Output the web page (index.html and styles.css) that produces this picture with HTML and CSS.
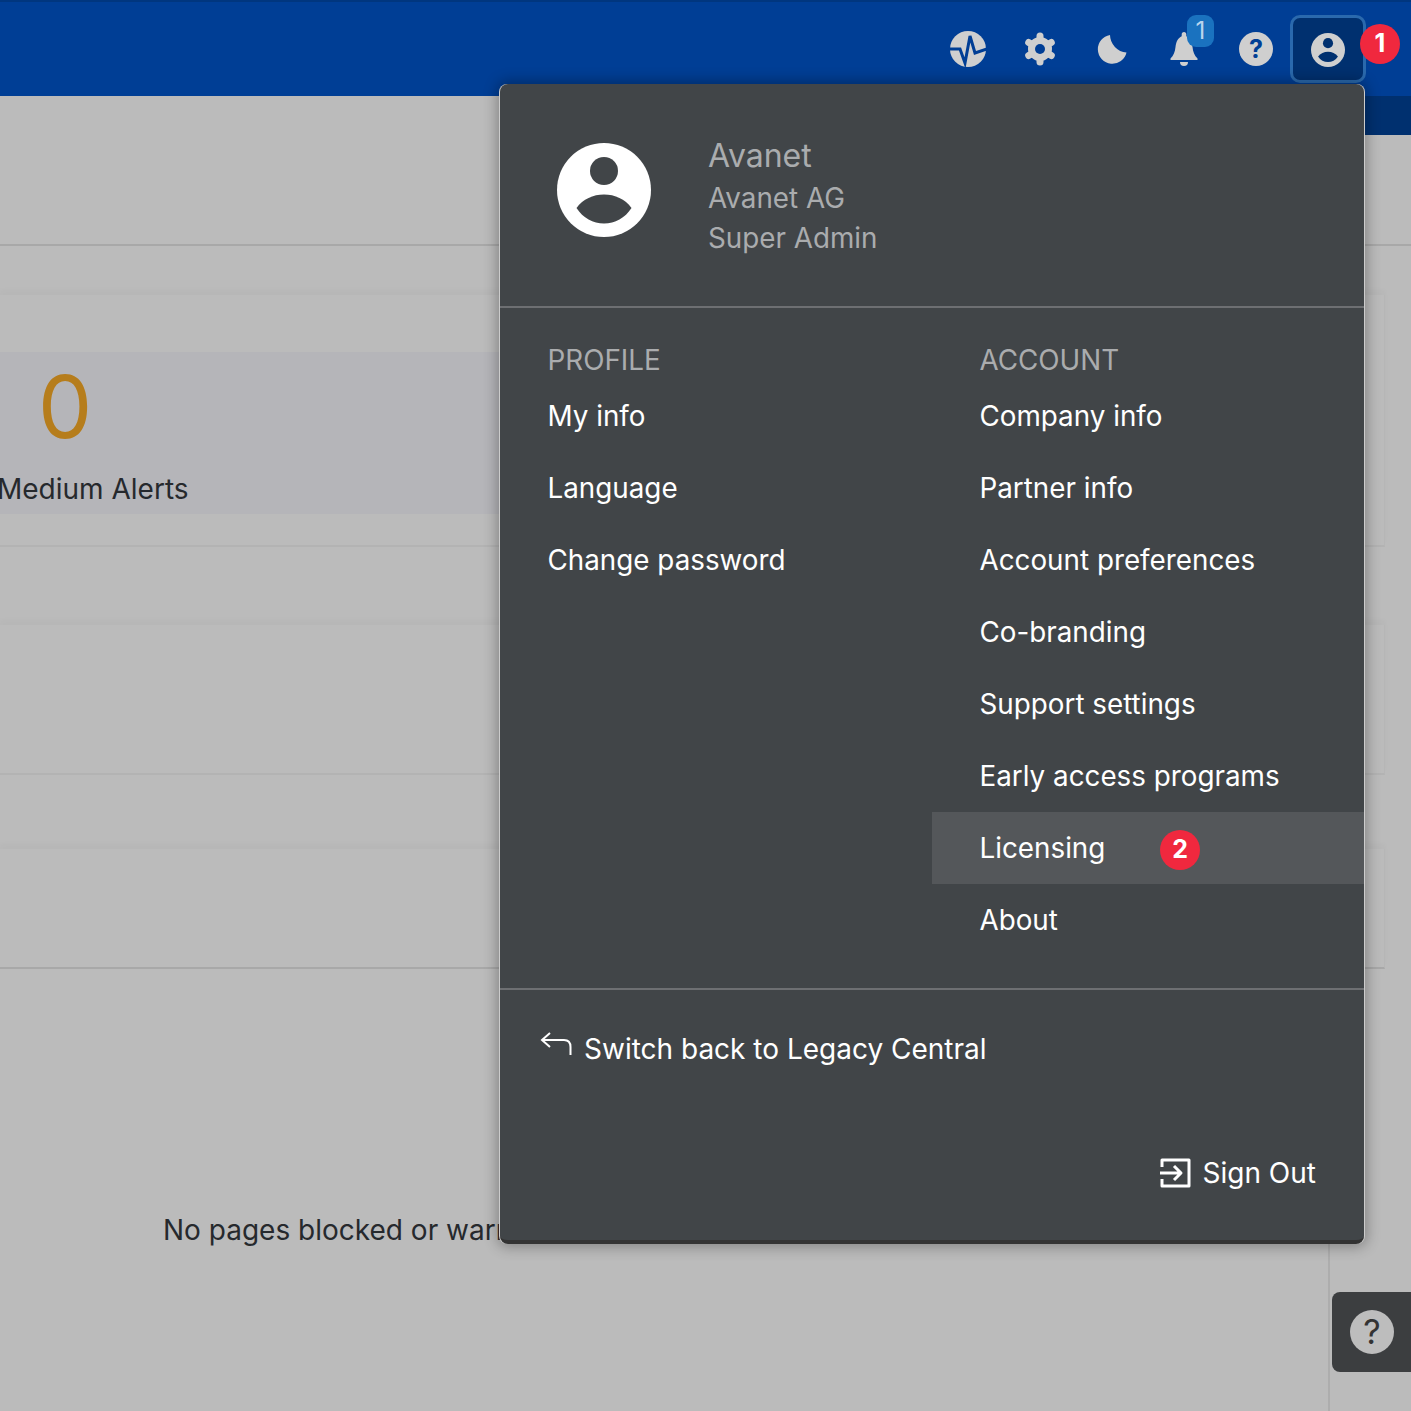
FILE: index.html
```html
<!DOCTYPE html>
<html lang="en">
<head>
    <meta charset="UTF-8">
    <meta name="viewport" content="width=device-width, initial-scale=1.0">
    <title>Central</title>
    <link rel="stylesheet" href="styles.css">
</head>
<body>
    <div class="page">
        <header class="topbar">
            <button class="top-btn">
                <svg width="38" height="38" viewBox="0 0 38 38">
                    <circle cx="19" cy="19" r="18" fill="#cfcfcf"/>
                    <polyline points="0,19 11,19 16,33 21,6 26,23 38,19" fill="none" stroke="#003e95" stroke-width="3"/>
                </svg>
            </button>
            <button class="top-btn">
                <svg width="36" height="36" viewBox="0 0 36 36">
                    <g stroke="#cfcfcf" stroke-width="7" stroke-linecap="round">
                        <line x1="18" y1="5" x2="18" y2="31"/>
                        <line x1="6.700" y1="11.500" x2="29.300" y2="24.500"/>
                        <line x1="6.700" y1="24.500" x2="29.300" y2="11.500"/>
                    </g>
                    <circle cx="18" cy="18" r="12" fill="#cfcfcf"/>
                    <circle cx="18" cy="18" r="5" fill="#003e95"/>
                </svg>
            </button>
            <button class="top-btn">
                <svg width="32" height="30" viewBox="0 0 32 30">
                    <path d="M14 1A14.500 14.500 0 1 0 30.500 18.500A18 18 0 0 1 14 1Z" fill="#cfcfcf"/>
                </svg>
            </button>
            <button class="top-btn">
                <svg width="28" height="34" viewBox="0 0 28 34">
                    <path d="M14 0c1.500 0 2.300 1 2.300 2.500v1.800C20 6 22 10 22.500 15c.5 5 2 8.500 5 11.500V28H.5v-1.500c3-3 4.500-6.500 5-11.500C6 10 8 6 11.700 4.300V2.500C11.700 1 12.500 0 14 0Z" fill="#cfcfcf"/>
                    <path d="M10 30h8a4 4 0 0 1-8 0Z" fill="#cfcfcf"/>
                </svg>
                <span class="bell-count">1</span>
            </button>
            <button class="top-btn">
                <span class="help-dot">?</span>
            </button>
            <button class="top-btn user-btn">
                <svg width="34" height="34" viewBox="0 0 94 94">
                    <circle cx="47" cy="47" r="47" fill="#cfcfcf"/>
                    <circle cx="47" cy="28" r="14" fill="#00306f"/>
                    <path d="M19.500 65C26 56 36 51.500 47 51.500S68 56 74.500 65C68 75 58 80.500 47 80.500S26 75 19.500 65Z" fill="#00306f"/>
                </svg>
                <span class="step-badge step-badge-top">1</span>
            </button>
        </header>

        <section class="page-head">
            <div class="subnav"></div>
        </section>

        <section class="card alerts-card">
            <div class="stat-band">
                <div class="stat-value">0</div>
                <div class="stat-label">Medium Alerts</div>
            </div>
        </section>
        <section class="card card-mid"></section>
        <section class="card card-low"></section>

        <section class="blocked">
            <p class="blocked-text">No pages blocked or warned</p>
        </section>

        <div class="user-menu">
            <div class="menu-head">
                <svg class="avatar" width="94" height="94" viewBox="0 0 94 94">
                    <circle cx="47" cy="47" r="47" fill="#ffffff"/>
                    <circle cx="47" cy="28" r="14" fill="#414548"/>
                    <path d="M19.500 65C26 56 36 51.500 47 51.500S68 56 74.500 65C68 75 58 80.500 47 80.500S26 75 19.500 65Z" fill="#414548"/>
                </svg>
                <div class="who">
                    <div class="who-name">Avanet</div>
                    <div class="who-line">Avanet AG</div>
                    <div class="who-line">Super Admin</div>
                </div>
            </div>

            <div class="menu-cols">
                <div class="menu-col">
                    <h3 class="col-title">PROFILE</h3>
                    <a class="menu-item">My info</a>
                    <a class="menu-item">Language</a>
                    <a class="menu-item">Change password</a>
                </div>
                <div class="menu-col">
                    <h3 class="col-title">ACCOUNT</h3>
                    <a class="menu-item">Company info</a>
                    <a class="menu-item">Partner info</a>
                    <a class="menu-item">Account preferences</a>
                    <a class="menu-item">Co-branding</a>
                    <a class="menu-item">Support settings</a>
                    <a class="menu-item">Early access programs</a>
                    <a class="menu-item menu-item-active">Licensing <span class="step-badge">2</span></a>
                    <a class="menu-item">About</a>
                </div>
            </div>

            <div class="menu-foot">
                <a class="switch-link">
                    <svg width="32" height="28" viewBox="0 0 32 28" fill="none" stroke="#ffffff" stroke-width="2">
                        <path d="M2 9H24Q30.500 9 30.500 16V24"/>
                        <path d="M10 2L2 9L10 16"/>
                    </svg>
                    Switch back to Legacy Central
                </a>
                <a class="sign-out">
                    <svg width="32" height="30" viewBox="0 0 32 30" fill="none" stroke="#ffffff" stroke-width="3" stroke-linejoin="round">
                        <path d="M3 9V2H30V28H3V21"/>
                        <path d="M1 15H22M15 8L22 15L15 22"/>
                    </svg>
                    Sign Out
                </a>
            </div>
        </div>

        <button class="help-tab"><span class="help-tab-dot">?</span></button>
    </div>
</body>
</html>
```

FILE: styles.css
```css
:root {
    --page: #bbbbbb;
    --blue: #003e95;
    --navy: #00306f;
    --menu: #414548;
    --rule: #a8a8a8;
    --red: #f0283e;
}

* {
    box-sizing: border-box;
}

body {
    margin: 0;
    background: var(--page);
    font-family: Inter, 'Liberation Sans', sans-serif;
    color: #26292d;
}

.page {
    position: relative;
    height: 1411px;
    overflow: hidden;
}

.topbar {
    display: flex;
    justify-content: flex-end;
    align-items: center;
    height: 96px;
    padding: 0 45px 0 0;
    background: var(--blue);
    border-top: 2px solid #00367f;
}

.top-btn {
    position: relative;
    display: flex;
    justify-content: center;
    align-items: center;
    width: 72px;
    height: 70px;
    padding: 0;
    border: none;
    background: none;
}

.user-btn {
    width: 76px;
    height: 68px;
    margin-left: -2px;
    padding-top: 2px;
    background: var(--navy);
    border: 3px solid #2a69ad;
    border-radius: 10px;
}

.bell-count {
    position: absolute;
    left: 39px;
    top: 1px;
    width: 27px;
    height: 32px;
    border-radius: 9px;
    background: #1a72bf;
    color: #b9d5ee;
    font: 24px/32px Inter, sans-serif;
    text-align: center;
}

.help-dot {
    width: 34px;
    height: 34px;
    border-radius: 50%;
    background: #cfcfcf;
    color: var(--blue);
    font: 700 25px/34px Inter, sans-serif;
    text-align: center;
}

.step-badge {
    display: inline-block;
    width: 40px;
    height: 40px;
    margin-left: 47px;
    border-radius: 50%;
    background: var(--red);
    color: #ffffff;
    font: 700 25px/38px Inter, sans-serif;
    text-align: center;
}

.step-badge-top {
    position: absolute;
    left: 67px;
    top: 6px;
    margin: 0;
}

.page-head {
    height: 150px;
    border-bottom: 2px solid var(--rule);
}

.subnav {
    width: 300px;
    height: 39px;
    margin-left: auto;
    background: var(--navy);
}

.card {
    width: 1385px;
    border-bottom: 2px solid #b3b3b3;
    border-right: 1px solid #b6b6b6;
    box-shadow: 0 -5px 5px rgba(0, 0, 0, 0.025);
}

.alerts-card {
    margin-top: 49px;
    padding: 57px 0 31px;
}

.stat-band {
    width: 1300px;
    height: 162px;
    padding-left: 38px;
    background: #b5b5b9;
}

.stat-value {
    height: 120px;
    padding-top: 6px;
    color: #b67d1c;
    font-size: 86px;
    font-weight: 400;
    line-height: 98px;
}

.stat-label {
    margin-left: -41px;
    font-size: 28px;
    line-height: 34px;
}

.card-mid {
    height: 150px;
    margin-top: 78px;
}

.card-low {
    height: 120px;
    margin-top: 74px;
    border-bottom-color: var(--rule);
}

.blocked {
    width: 1330px;
    height: 443px;
    padding: 244px 0 0 163px;
    border-right: 2px solid #adadad;
}

.blocked-text {
    margin: 0;
    font-size: 28px;
    line-height: 34px;
    white-space: nowrap;
}

.user-menu {
    position: absolute;
    left: 500px;
    top: 84px;
    width: 864px;
    height: 1160px;
    background: var(--menu);
    border-bottom: 4px solid #333333;
    border-radius: 8px;
    box-shadow: -1px 0 0 #cccccc, 1px 0 0 #cccccc, 0 0 14px 3px rgba(0, 0, 0, 0.3);
    color: #ffffff;
}

.menu-head {
    display: flex;
    align-items: center;
    gap: 57px;
    height: 224px;
    padding-left: 57px;
    border-bottom: 2px solid #6d6f72;
}

.avatar {
    margin-bottom: 10px;
}

.who {
    color: #aaacae;
}

.who-name {
    font-size: 32px;
    line-height: 45px;
}

.who-line {
    font-size: 27.800px;
    line-height: 40px;
}

.menu-cols {
    display: flex;
    height: 682px;
    padding-top: 32px;
    border-bottom: 2px solid #6d6f72;
}

.menu-col {
    width: 432px;
}

.col-title {
    margin: 0;
    height: 40px;
    padding-left: 47.500px;
    color: #aaacae;
    font-size: 27.800px;
    font-weight: 400;
    line-height: 40px;
}

.menu-item {
    display: block;
    height: 72px;
    padding-left: 47.500px;
    font-size: 27.800px;
    line-height: 72px;
}

.menu-item-active {
    background: #54575a;
}

.menu-foot {
    padding: 39px 48px 0 40px;
}

.switch-link {
    display: flex;
    align-items: center;
    gap: 12px;
    font-size: 28px;
    line-height: 40px;
}

.switch-link svg {
    margin-bottom: 8px;
}

.sign-out {
    display: flex;
    justify-content: flex-end;
    align-items: center;
    gap: 12px;
    margin-top: 84px;
    font-size: 28px;
    line-height: 40px;
}

.help-tab {
    position: absolute;
    right: 0;
    top: 1292px;
    width: 79px;
    height: 80px;
    padding: 0 0 0 18px;
    border: none;
    border-radius: 8px 0 0 8px;
    background: #3c3e40;
}

.help-tab-dot {
    display: block;
    width: 44px;
    height: 44px;
    border-radius: 50%;
    background: #bdbdbd;
    color: #333333;
    font: 400 34px/44px Inter, sans-serif;
    text-align: center;
}
```
